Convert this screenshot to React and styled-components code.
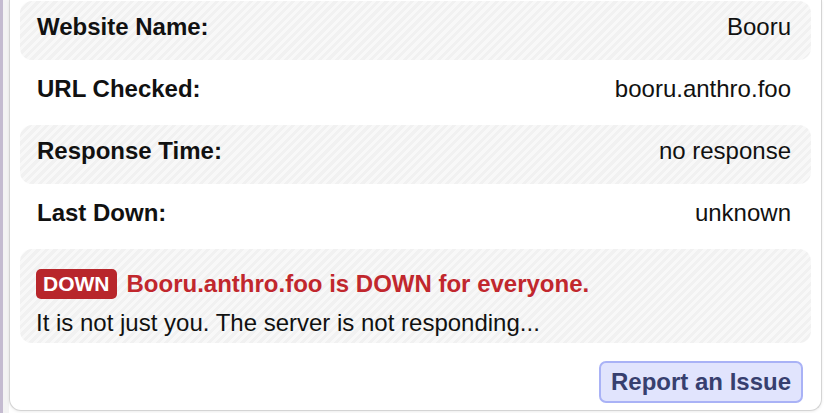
import React from "react";
import styled, { createGlobalStyle } from "styled-components";

const GlobalStyle = createGlobalStyle`
  html, body {
    margin: 0;
    padding: 0;
    background: #ffffff;
  }
  body {
    font-family: "Liberation Sans", Arial, Helvetica, sans-serif;
    color: #111;
  }
`;

const stripes = `repeating-linear-gradient(
  135deg,
  #f1f1f1 0px,
  #f1f1f1 3px,
  #f8f8f8 3px,
  #f8f8f8 6px
)`;

const Page = styled.div`
  display: flex;
  height: 413px;
  overflow: hidden;
  border-left: 3px solid #c4bbd0;
  background: linear-gradient(to right, #f3f3f3 6px, #ffffff 6px);
  padding-right: 6px;
`;

const Card = styled.div`
  flex: 1;
  margin-left: 6px;
  background: #fff;
  border: 1px solid #d4d4d4;
  border-top: none;
  border-radius: 0 0 12px 12px;
  box-shadow: 0 1px 3px rgba(0, 0, 0, 0.08);
  padding: 0 10px 8px;
  display: flex;
  flex-direction: column;
  height: 411px;
  box-sizing: border-box;
`;

const TopEdge = styled.div`
  height: 2px;
  width: 410px;
  background: #e4e4e4;
`;

const Rows = styled.div`
  display: flex;
  flex-direction: column;
  gap: 3px;
  margin-top: 1px;
`;

const Row = styled.div`
  display: flex;
  justify-content: space-between;
  align-items: flex-start;
  height: 59px;
  box-sizing: border-box;
  padding: 12px 20px 0 17px;
  border-radius: 12px;
  font-size: 24px;
  background: ${({ $striped }) => ($striped ? stripes : "transparent")};
`;

const Label = styled.span`
  font-weight: 700;
`;

const Value = styled.span`
  font-weight: 400;
`;

const Alert = styled.div`
  margin-top: 3px;
  border-radius: 12px;
  background: ${stripes};
  padding: 20px 18px 6px 16px;
  display: flex;
  flex-direction: column;
  gap: 10px;
`;

const Heading = styled.div`
  display: flex;
  align-items: center;
  gap: 10px;
  height: 30px;
  font-size: 24px;
  font-weight: 700;
  color: #c1272d;
`;

const Badge = styled.span`
  background: #b8262b;
  color: #fff;
  font-size: 21px;
  font-weight: 700;
  border-radius: 5px;
  padding: 0 7px;
  height: 30px;
  line-height: 30px;
`;

const Message = styled.p`
  margin: 0;
  font-size: 24px;
`;

const Footer = styled.div`
  display: flex;
  justify-content: flex-end;
  padding-right: 8px;
  margin-top: 18px;
`;

const Button = styled.button`
  font-family: inherit;
  font-size: 24px;
  font-weight: 700;
  color: #373f6f;
  background: #e1e4fd;
  border: 2px solid #a9b2f6;
  border-radius: 7px;
  height: 42px;
  padding: 0 10px;
  cursor: pointer;
`;

const details = [
  { label: "Website Name:", value: "Booru" },
  { label: "URL Checked:", value: "booru.anthro.foo" },
  { label: "Response Time:", value: "no response" },
  { label: "Last Down:", value: "unknown" },
];

export default function App() {
  return (
    <>
      <GlobalStyle />
      <Page>
        <Card>
          <TopEdge />
          <Rows>
            {details.map((item, index) => (
              <Row key={item.label} $striped={index % 2 === 0}>
                <Label>{item.label}</Label>
                <Value>{item.value}</Value>
              </Row>
            ))}
          </Rows>
          <Alert>
            <Heading>
              <Badge>DOWN</Badge>
              Booru.anthro.foo is DOWN for everyone.
            </Heading>
            <Message>It is not just you. The server is not responding...</Message>
          </Alert>
          <Footer>
            <Button>Report an Issue</Button>
          </Footer>
        </Card>
      </Page>
    </>
  );
}
